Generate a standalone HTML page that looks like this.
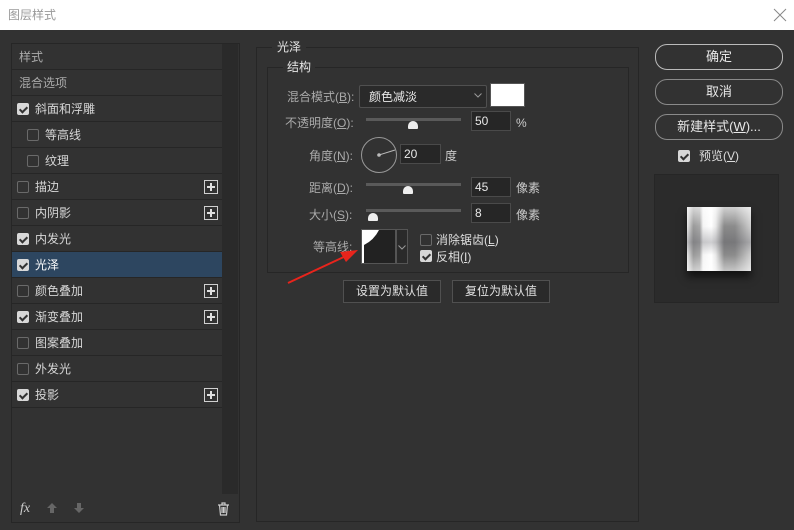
<!DOCTYPE html>
<html><head><meta charset="utf-8">
<style>
*{margin:0;padding:0;box-sizing:border-box}
body{width:794px;height:530px;background:#323232;position:relative;overflow:hidden;font-family:"Liberation Sans","Noto Sans CJK SC",sans-serif;font-size:12px;color:#d6d6d6}
.a{position:absolute}
.t{position:absolute;white-space:nowrap;line-height:14px}
.row{position:absolute;left:12px;width:210px;height:26px;border-bottom:1px solid #262626}
.row span{position:absolute;top:6px;line-height:14px;white-space:nowrap}
.cb{position:absolute;width:12px;height:12px;border:1px solid #6a6a6a;border-radius:2px;top:7px}
.cb.on{background:#d8d8d8;border-color:#d8d8d8}
.cb.on::after{content:"";position:absolute;left:3px;top:1px;width:3px;height:6px;border:solid #333;border-width:0 2px 2px 0;transform:rotate(45deg)}
.plus{position:absolute;left:192px;top:6px;width:14px;height:14px;border:1px solid #d0d0d0}
.plus::before{content:"";position:absolute;left:2px;top:5px;width:8px;height:2px;background:#e0e0e0}
.plus::after{content:"";position:absolute;left:5px;top:2px;width:2px;height:8px;background:#e0e0e0}
.inp{position:absolute;background:#262626;border:1px solid #4a4a4a;color:#e8e8e8;padding-left:3px;line-height:18px;height:20px}
.sl{position:absolute;height:3px;background:#5a5a5a}
.th{position:absolute;width:10px;height:8px;background:#eee;border-radius:5px 5px 1px 1px}
.btn{position:absolute;border:1px solid #505050;background:#2a2a2a;color:#e0e0e0;text-align:center;line-height:21px;height:23px}
.rb{position:absolute;left:655px;width:128px;border:1px solid #8a8a8a;border-radius:12px;text-align:center;color:#e8e8e8;height:26px;line-height:24px;font-size:13px}
</style></head><body>
<div class="a" style="left:0;top:0;width:794px;height:30px;background:#fff"></div>
<div class="t" style="left:8px;top:8px;color:#999;font-size:12px">图层样式</div>
<svg class="a" style="left:773px;top:8px" width="14" height="14"><path d="M1 1 L13 13 M13 1 L1 13" stroke="#888" stroke-width="1"/></svg>

<!-- left panel -->
<div class="a" style="left:11px;top:43px;width:229px;height:480px;border:1px solid #262626"></div>
<div class="a" style="left:222px;top:44px;width:16px;height:450px;background:#2a2a2a"></div>
<div class="row" style="top:44px"><span style="left:7px;color:#aaa">样式</span></div>
<div class="row" style="top:70px"><span style="left:7px;color:#aaa">混合选项</span></div>
<div class="row" style="top:96px"><div class="cb on" style="left:5px"></div><span style="left:23px">斜面和浮雕</span></div>
<div class="row" style="top:122px"><div class="cb" style="left:15px"></div><span style="left:33px">等高线</span></div>
<div class="row" style="top:148px"><div class="cb" style="left:15px"></div><span style="left:33px">纹理</span></div>
<div class="row" style="top:174px"><div class="cb" style="left:5px"></div><span style="left:23px">描边</span><div class="plus"></div></div>
<div class="row" style="top:200px"><div class="cb" style="left:5px"></div><span style="left:23px">内阴影</span><div class="plus"></div></div>
<div class="row" style="top:226px"><div class="cb on" style="left:5px"></div><span style="left:23px">内发光</span></div>
<div class="row" style="top:252px;background:#2d4660"><div class="cb on" style="left:5px"></div><span style="left:23px;color:#fff">光泽</span></div>
<div class="row" style="top:278px"><div class="cb" style="left:5px"></div><span style="left:23px">颜色叠加</span><div class="plus"></div></div>
<div class="row" style="top:304px"><div class="cb on" style="left:5px"></div><span style="left:23px">渐变叠加</span><div class="plus"></div></div>
<div class="row" style="top:330px"><div class="cb" style="left:5px"></div><span style="left:23px">图案叠加</span></div>
<div class="row" style="top:356px"><div class="cb" style="left:5px"></div><span style="left:23px">外发光</span></div>
<div class="row" style="top:382px"><div class="cb on" style="left:5px"></div><span style="left:23px">投影</span><div class="plus"></div></div>
<div class="t" style="left:20px;top:502px;font-style:italic;font-size:14px;color:#ccc;font-family:'Liberation Serif',serif">fx</div>
<svg class="a" style="left:46px;top:502px" width="12" height="12"><path d="M6 1 L11 6 H8 V11 H4 V6 H1 Z" fill="#666"/></svg>
<svg class="a" style="left:73px;top:502px" width="12" height="12"><path d="M6 11 L11 6 H8 V1 H4 V6 H1 Z" fill="#666"/></svg>
<svg class="a" style="left:217px;top:502px" width="13" height="14"><path d="M1 3 H12 M5 3 V1 H8 V3 M2.5 3 L3.5 13 H9.5 L10.5 3 M5 5 V11 M6.5 5 V11 M8 5 V11" stroke="#ccc" stroke-width="1.2" fill="none"/></svg>

<!-- middle panel -->
<div class="a" style="left:256px;top:47px;width:383px;height:475px;border:1px solid #262626"></div>
<div class="t" style="left:272px;top:40px;padding:0 5px;background:#323232;color:#e6e6e6">光泽</div>
<div class="a" style="left:267px;top:67px;width:362px;height:206px;border:1px solid #262626"></div>
<div class="t" style="left:283px;top:60px;padding:0 4px;background:#323232;color:#e6e6e6">结构</div>

<div class="t" style="left:287px;top:90px;color:#aaa">混合模式(<u>B</u>):</div>
<div class="a" style="left:359px;top:85px;width:128px;height:23px;border:1px solid #505050;background:#2a2a2a;border-radius:2px"></div>
<div class="t" style="left:369px;top:90px;color:#e8e8e8">颜色减淡</div>
<svg class="a" style="left:474px;top:93px" width="8" height="5"><path d="M0.5 0.5 L4 4 L7.5 0.5" stroke="#999" fill="none"/></svg>
<div class="a" style="left:490px;top:83px;width:35px;height:24px;background:#fff;border:1px solid #555"></div>

<div class="t" style="left:285px;top:116px;color:#aaa">不透明度(<u>O</u>):</div>
<div class="sl" style="left:366px;top:118px;width:95px"></div>
<div class="th" style="left:408px;top:121px"></div>
<div class="inp" style="left:471px;top:111px;width:40px">50</div>
<div class="t" style="left:516px;top:116px;color:#ccc">%</div>

<div class="t" style="left:309px;top:149px;color:#aaa">角度(<u>N</u>):</div>
<div class="a" style="left:361px;top:137px;width:36px;height:36px;border:1px solid #999;border-radius:50%"></div>
<svg class="a" style="left:361px;top:137px" width="36" height="36"><line x1="18" y1="18" x2="34" y2="13" stroke="#bbb" stroke-width="1"/><circle cx="18" cy="18" r="1.8" fill="#bbb"/></svg>
<div class="inp" style="left:400px;top:144px;width:41px">20</div>
<div class="t" style="left:445px;top:149px;color:#ccc">度</div>

<div class="t" style="left:309px;top:181px;color:#aaa">距离(<u>D</u>):</div>
<div class="sl" style="left:366px;top:183px;width:95px"></div>
<div class="th" style="left:403px;top:186px"></div>
<div class="inp" style="left:471px;top:177px;width:40px">45</div>
<div class="t" style="left:516px;top:181px;color:#ccc">像素</div>

<div class="t" style="left:309px;top:208px;color:#aaa">大小(<u>S</u>):</div>
<div class="sl" style="left:366px;top:209px;width:95px"></div>
<div class="th" style="left:368px;top:213px"></div>
<div class="inp" style="left:471px;top:203px;width:40px">8</div>
<div class="t" style="left:516px;top:208px;color:#ccc">像素</div>

<div class="t" style="left:313px;top:240px;color:#aaa">等高线:</div>
<div class="a" style="left:361px;top:229px;width:35px;height:35px;border:1px solid #555;background:#222"></div>
<svg class="a" style="left:362px;top:230px" width="33" height="33"><path d="M0 0 H17 Q12 10 2 15 L2 33 H0 Z" fill="#fff"/></svg>
<div class="a" style="left:396px;top:229px;width:12px;height:35px;border:1px solid #555;background:#2a2a2a"></div>
<svg class="a" style="left:398px;top:245px" width="8" height="5"><path d="M0.5 0.5 L4 4 L7.5 0.5" stroke="#999" fill="none"/></svg>
<div class="cb" style="left:420px;top:234px"></div>
<div class="t" style="left:436px;top:233px;color:#ddd">消除锯齿(<u>L</u>)</div>
<div class="cb on" style="left:420px;top:250px"></div>
<div class="t" style="left:436px;top:250px;color:#ddd">反相(<u>I</u>)</div>

<svg class="a" style="left:0;top:0" width="794" height="530"><line x1="288" y1="283" x2="348" y2="255" stroke="#e8241c" stroke-width="2"/><polygon points="358,250 340,252 346,262" fill="#e8241c"/></svg>

<div class="btn" style="left:343px;top:280px;width:98px">设置为默认值</div>
<div class="btn" style="left:452px;top:280px;width:98px">复位为默认值</div>

<!-- right -->
<div class="rb" style="top:44px;border-color:#bbb">确定</div>
<div class="rb" style="top:79px">取消</div>
<div class="rb" style="top:114px">新建样式(<u>W</u>)...</div>
<div class="cb on" style="left:678px;top:150px"></div>
<div class="t" style="left:699px;top:149px;color:#ddd">预览(<u>V</u>)</div>
<div class="a" style="left:654px;top:174px;width:125px;height:129px;background:#2b2b2b;border:1px solid #262626"></div>
<div class="a" style="left:687px;top:207px;width:64px;height:64px;box-shadow:0 6px 8px rgba(0,0,0,.6);background:linear-gradient(90deg,#e8e8e8 0%,#9a9a9a 10%,#a8a8a8 20%,#f4f4f4 25%,#fff 38%,#e8e8e8 45%,#8a8a8a 58%,#8c8c8c 75%,#cfcfcf 100%)"></div>
<div class="a" style="left:687px;top:207px;width:64px;height:64px;background:linear-gradient(180deg,rgba(255,255,255,.6),rgba(255,255,255,0) 30%,rgba(60,60,70,.25) 55%,rgba(255,255,255,0) 75%,rgba(255,255,255,.5))"></div>
</body></html>
